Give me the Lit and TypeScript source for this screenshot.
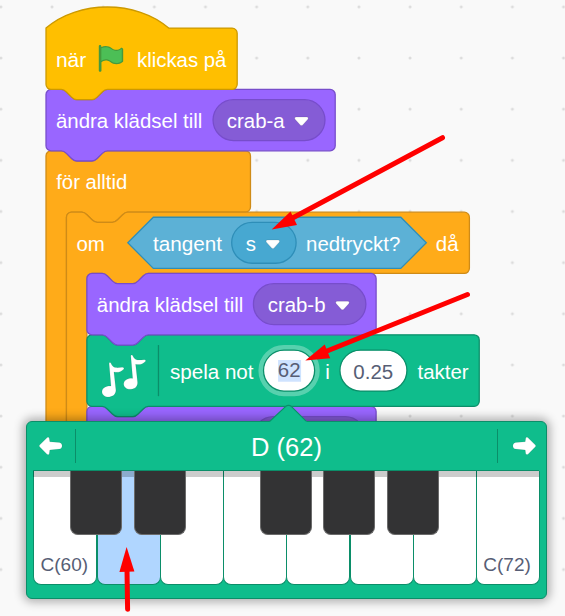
import { LitElement, html, svg, css } from "lit";
import { customElement } from "lit/decorators.js";

// Workspace origin and zoom: block geometry below is in block units.
const SCALE = 1.278;
const NOTCH_IN = "c2 0 3 1 4 2l4 4c1 1 2 2 4 2h12c2 0 3 -1 4 -2l4 -4c1 -1 2 -2 4 -2";
const NOTCH_OUT = "c-2 0 -3 1 -4 2l-4 4c-1 1 -2 2 -4 2h-12c-2 0 -3 -1 -4 -2l-4 -4c-1 -1 -2 -2 -4 -2";

const stackPath = (w: number, h: number) =>
  `M0 4a4 4 0 0 1 4 -4h8${NOTCH_IN}H${w - 4}a4 4 0 0 1 4 4V${h - 4}a4 4 0 0 1 -4 4H48${NOTCH_OUT}H4a4 4 0 0 1 -4 -4z`;

const hatPath = (w: number, h: number) =>
  `M0 0c25 -22 71 -22 96 0H${w - 4}a4 4 0 0 1 4 4V${h - 4}a4 4 0 0 1 -4 4H48${NOTCH_OUT}H4a4 4 0 0 1 -4 -4z`;

// C-shaped block whose mouth runs on beneath the note picker.
const mouthPath = (w: number, h: number) =>
  `M0 4a4 4 0 0 1 4 -4h8${NOTCH_IN}H${w - 4}a4 4 0 0 1 4 4V44a4 4 0 0 1 -4 4H64${NOTCH_OUT}H20a4 4 0 0 0 -4 4V${h}H0z`;

const block = (kind: string, x: number, y: number, d: string) =>
  svg`<path class=${kind} transform=${`translate(${x} ${y})`} d=${d}></path>`;

const label = (x: number, y: number, w: number, text: string, cls = "label") =>
  svg`<text class=${cls} x=${x} y=${y} textLength=${w} lengthAdjust="spacingAndGlyphs">${text}</text>`;

const pill = (kind: string, x: number, y: number, w: number) =>
  svg`<rect class=${kind} x=${x} y=${y} width=${w} height="32" rx="16"></rect>`;

const caret = (x: number, y: number) =>
  svg`<path class="caret" transform=${`translate(${x} ${y})`}
    d="M1.2 0H9.4C10.6 0 11 1.1 10.2 1.9L6.3 6.2Q5.3 7 4.3 6.2L.4 1.9C-.4 1.1 0 0 1.2 0z"></path>`;

const FLAG_OUTLINE =
  "M20.8 3.7c-.4-.2-.9-.1-1.2.2-2 1.6-4.8 1.6-6.8 0-2.3-1.9-5.6-2.3-8.3-1v-.4c0-.6-.5-1-1-1s-1 .4-1 1v18.8c0 .5.5 1 1 1h.1c.5 0 1-.5 1-1v-6.4c1-.7 2.1-1.2 3.4-1.3 1.2 0 2.4.4 3.4 1.2 2.9 2.3 7 2.3 9.8 0 .3-.2.4-.5.4-.9V4.7c0-.5-.3-.9-.8-1z";
const FLAG_CLOTH =
  "M20.5 13.9C18 16 14.4 16 11.9 14c-1.1-.9-2.5-1.4-4-1.4-1.2.1-2.3.5-3.4 1.1V4c2.5-1.4 5.5-1.1 7.7.6 2.4 1.9 5.7 1.9 8.1 0h.2z";
const NOTE =
  "M7.2 1.2C7.1 -.2 8.7 -.4 9.1 .7C10.1 3.4 11.5 4.7 14 5C16.5 5.3 19 4.5 21.2 4.8C22.3 5 22.3 6 21.5 6.8C18.8 9.5 15.6 10.2 12 9.4L13.9 26.5C14.6 31 11.6 34 7.4 34.3C3.2 34.6 .2 32.4 .1 29.3C0 25.8 3.8 23.1 9.1 23.5Z";

@customElement("block-script")
class BlockScript extends LitElement {
  static styles = css`
    :host { display: block; }
    svg { display: block; width: 565px; height: 616px; }
    .dot { fill: #dcdcdc; }
    .event { fill: #ffbf00; stroke: #cc9900; }
    .looks { fill: #9966ff; stroke: #774dcb; }
    .looks-field { fill: #855cd6; stroke: #774dcb; }
    .control { fill: #ffab19; stroke: #cf8b17; }
    .sensing { fill: #5cb1d6; stroke: #2e8eb8; }
    .sensing-field { fill: #47a8d1; stroke: #2e8eb8; }
    .music { fill: #0fbd8c; stroke: #0b8e69; }
    .divider { stroke: #0b8e69; }
    .number { fill: #ffffff; stroke: #0b8e69; }
    .halo { fill: none; stroke: #ffffff; stroke-opacity: 0.3; stroke-width: 8; }
    .selection { fill: #cfe3ff; }
    .flag-edge { fill: #45993d; }
    .flag-cloth { fill: #4cbf56; }
    .caret { fill: #ffffff; stroke: #000000; stroke-opacity: 0.1; stroke-width: 0.8; }
    .note { fill: #ffffff; stroke: #000000; stroke-opacity: 0.1; stroke-width: 0.8; }
    text { font-family: "Liberation Sans", Arial, sans-serif; font-size: 16px; }
    .label { fill: #ffffff; }
    .value { fill: #575e75; }
  `;

  render() {
    return html`<svg viewBox="0 0 565 616">
      <defs>
        <pattern id="grid" x="-1.1" y="4.9" width="51.15" height="51.15" patternUnits="userSpaceOnUse">
          <circle class="dot" cx="2" cy="2" r="1.5"></circle>
        </pattern>
      </defs>
      <rect width="565" height="616" fill="url(#grid)"></rect>
      <g transform=${`translate(46 28.1) scale(${SCALE})`}>
        ${block("control", 0, 96, mouthPath(160, 300))}
        ${block("control", 16, 144, mouthPath(315.3, 240))}
        ${block("looks", 32, 296, stackPath(226.3, 48))}
        ${pill("looks-field", 162, 304, 88)}
        ${block("music", 32, 240, stackPath(307, 56))}
        ${block("looks", 32, 192, stackPath(226.3, 48))}
        ${block("looks", 0, 48, stackPath(226.3, 48))}
        ${block("event", 0, 0, hatPath(149.6, 48))}

        ${label(7.8, 30.2, 23.7, "när")}
        <g transform="translate(38.8 11.8)">
          <path class="flag-edge" d=${FLAG_OUTLINE}></path>
          <path class="flag-cloth" d=${FLAG_CLOTH}></path>
        </g>
        ${label(71.2, 30.2, 70, "klickas på")}

        ${label(7.8, 78.2, 114.6, "ändra klädsel till")}
        ${pill("looks-field", 130.7, 56, 87.6)}
        ${label(141.5, 78.2, 45.2, "crab-a")}
        ${caret(194.6, 69.6)}

        ${label(8, 126.2, 55.6, "för alltid")}

        ${label(23.8, 174.2, 22.2, "om")}
        <path class="sensing" d="M84 148H277.6L297.6 168L277.6 188H84L64 168z"></path>
        ${label(83.8, 174.2, 54, "tangent")}
        ${pill("sensing-field", 145.3, 152, 50.4)}
        ${label(156.3, 174.2, 8, "s")}
        ${caret(172.2, 165.8)}
        ${label(203.5, 174.2, 73.7, "nedtryckt?")}
        ${label(305, 174.2, 17.8, "då")}

        ${label(39.8, 222.2, 114.6, "ändra klädsel till")}
        ${pill("looks-field", 162.3, 200, 88)}
        ${label(173.5, 222.2, 45.2, "crab-b")}
        ${caret(226.7, 213.8)}

        <path class="divider" d="M88 248V288"></path>
        ${label(97, 274.3, 65.4, "spela not")}
        <rect class="halo" x="170.2" y="252" width="40" height="32" rx="16"></rect>
        ${pill("number", 170.2, 252, 40)}
        <rect class="selection" x="181.6" y="259.7" width="18" height="17"></rect>
        ${label(181.4, 273.4, 17.8, "62", "value")}
        ${label(218.5, 274.3, 3.6, "i")}
        ${pill("number", 230, 252, 52.4)}
        ${label(240.5, 274.3, 31.2, "0.25", "value")}
        ${label(290.7, 274.3, 40, "takter")}
      </g>
      <path class="note" transform="translate(101.9 362.6)" d=${NOTE}></path>
      <path class="note" transform="translate(123.6 354.9)" d=${NOTE}></path>
    </svg>`;
  }
}

@customElement("piano-picker")
class PianoPicker extends LitElement {
  static styles = css`
    :host {
      display: flex;
      flex-direction: column;
      box-sizing: border-box;
      width: 521px;
      height: 178px;
      padding: 0 7px 13px;
      background: #0fbd8c;
      border: 1px solid #0b8e69;
      border-radius: 6px;
      box-shadow: 0 0 10px 3px rgba(0, 0, 0, 0.3);
      position: relative;
      font-family: "Liberation Sans", Arial, sans-serif;
    }
    .pointer { position: absolute; left: 241px; top: -18px; width: 40px; height: 20px; }
    .pointer path { fill: #0fbd8c; stroke: #0b8e69; stroke-width: 1.2; stroke-dasharray: 49 80; }
    header {
      display: flex;
      align-items: center;
      flex: none;
      height: 48px;
      box-sizing: border-box;
    }
    .step { width: 42px; height: 34px; box-sizing: border-box; border-right: 1px solid #0b8e69; padding: 7px 0 0 3.5px; }
    .step.next { border-right: 0; border-left: 1px solid #0b8e69; padding-left: 12.5px; }
    .step svg { display: block; width: 26px; height: 20px; overflow: visible; }
    .step path { fill: #ffffff; stroke: #000000; stroke-opacity: 0.1; stroke-width: 0.8; }
    .next svg { transform: scaleX(-1); }
    h1 { flex: 1; margin: 0; padding-top: 1px; font-size: 25.5px; font-weight: 400; line-height: 30px; text-align: center; color: #ffffff; }
    .keys {
      position: relative;
      display: grid;
      grid-template-columns: repeat(8, minmax(0, 1fr));
      height: 115px;
      flex: none;
      box-sizing: border-box;
      border-top: 1px solid #0b8e69;
      width: 506px;
      margin-left: -0.6px;
    }
    .white {
      display: flex;
      align-items: flex-end;
      justify-content: center;
      background: #ffffff;
      border: 1px solid #0b8e69;
      border-top: 0;
      border-radius: 0 0 8px 8px;
      box-sizing: border-box;
      padding-bottom: 8px;
      margin-right: -0.6px;
      font-size: 19px;
      line-height: 22px;
      color: #575e75;
      white-space: nowrap;
    }
    .white span { margin-left: -2px; }
    .white.on { background: #b0d6ff; }
    .shade { position: absolute; inset: 0 0 auto; height: 6px; background: rgba(0, 0, 0, 0.2); }
    .sharps { position: absolute; inset: 0; display: grid; grid-template-columns: repeat(8, minmax(0, 1fr)); }
    .black {
      width: 52px;
      height: 64px;
      box-sizing: border-box;
      margin-left: 37px;
      background: #333334;
      border: 1px solid #6b6b6b;
      border-top: 0;
      border-radius: 0 0 8px 8px;
    }
    .c1 { grid-column: 1; grid-row: 1; }
    .c2 { grid-column: 2; grid-row: 1; }
    .c4 { grid-column: 4; grid-row: 1; }
    .c5 { grid-column: 5; grid-row: 1; }
    .c6 { grid-column: 6; grid-row: 1; }
  `;

  private arrow() {
    return html`<svg viewBox="0 0 26 20">
      <path d="M1.6 9.1L9 1.7C10 .8 11.1 1.2 11.3 2.4L11.8 5.7L21.4 6.5C25 7 25 12.6 21.4 13.1L11.8 14L11.3 17.5C11.1 18.7 10 19.1 9 18.2L1.6 10.8Q.8 10 1.6 9.1z"></path>
    </svg>`;
  }

  render() {
    const names = ["C(60)", "", "", "", "", "", "", "C(72)"];
    return html`
      <svg class="pointer" viewBox="0 0 40 20">
        <path d="M1.5 17.6L17.5 2.6Q20.5 .2 23.5 2.6L38.5 17.6V20H1.5"></path>
      </svg>
      <header>
        <div class="step">${this.arrow()}</div>
        <h1>D (62)</h1>
        <div class="step next">${this.arrow()}</div>
      </header>
      <div class="keys">
        ${names.map((n, i) => html`<div class="white ${i === 1 ? "on" : ""}"><span>${n}</span></div>`)}
        <div class="shade"></div>
        <div class="sharps">${[1, 2, 4, 5, 6].map((c) => html`<div class="black c${c}"></div>`)}</div>
      </div>
    `;
  }
}

@customElement("app-root")
class AppRoot extends LitElement {
  static styles = css`
    :host {
      display: block;
      position: relative;
      width: 565px;
      height: 616px;
      overflow: hidden;
      background: #f9f9f9;
    }
    piano-picker { position: absolute; left: 26px; top: 421px; }
    .pointers { position: absolute; inset: 0; width: 565px; height: 616px; }
    .shaft { stroke: #ff0000; stroke-width: 5; stroke-linecap: round; }
    .head { fill: #ff0000; }
  `;

  render() {
    return html`
      <block-script></block-script>
      <piano-picker></piano-picker>
      <svg class="pointers" viewBox="0 0 565 616">
        <path class="shaft" d="M442.5 137.7L293 217.8"></path>
        <path class="head" d="M271.7 229.5L290.5 211.4L297 225z"></path>
        <path class="shaft" d="M467.5 294.5L327 351"></path>
        <path class="head" d="M305.3 360.5L324.7 344.6L330.2 358.2z"></path>
        <path class="shaft" d="M127.6 609.3L127 570"></path>
        <path class="head" d="M126.6 547L134.4 571.5L119.4 572z"></path>
      </svg>
    `;
  }
}
